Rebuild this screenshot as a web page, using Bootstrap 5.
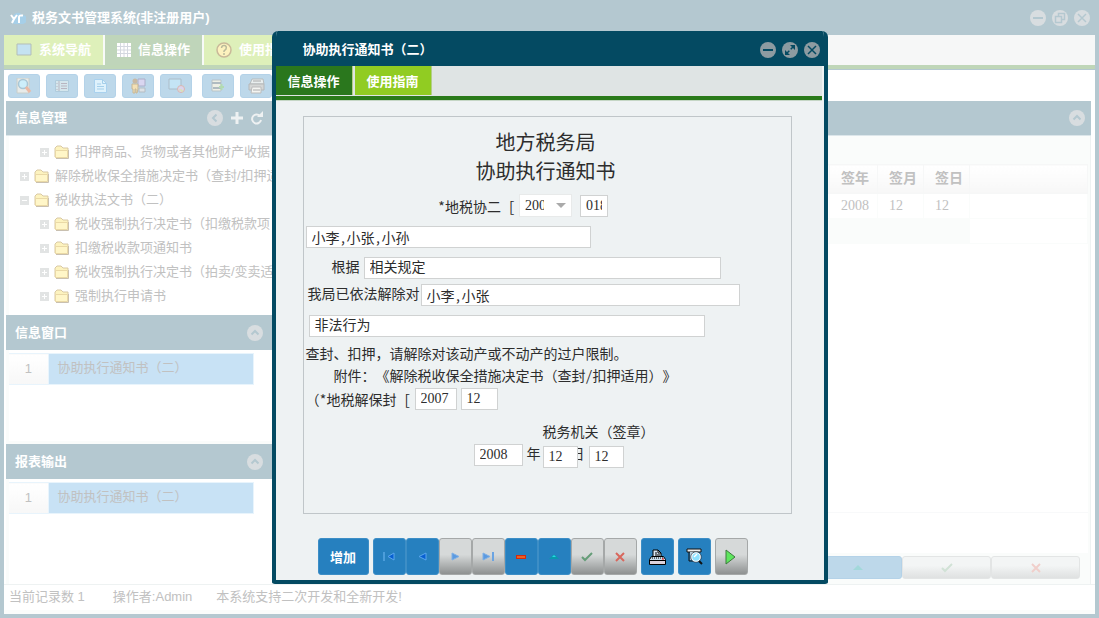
<!DOCTYPE html>
<html lang="zh-CN">
<head>
<meta charset="utf-8">
<meta name="viewport" content="width=device-width, initial-scale=1">
<title>税务文书管理系统</title>
<link rel="stylesheet" href="https://cdn.jsdelivr.net/npm/bootstrap@5.3.0/dist/css/bootstrap.min.css">
<style>
:root{--frame:#b4c8d0;--deep:#044a62;--pane:#fafcfb;--faint:#c1c1c1;--ink:#2d2d2d;}
body{font:13px/20px "Liberation Sans","Noto Sans CJK SC",sans-serif;color:var(--faint);background:var(--frame);text-spacing-trim:space-all}
svg{display:block;flex:none}
button{border:0;padding:0;background:none;color:inherit;font:inherit}
.app{min-height:100vh;border:solid var(--frame);border-width:0 4px 4px;overflow:hidden}
.titlebar{height:35px;background:var(--frame);color:#fff;font-weight:700;padding:0 5px 0 6px;gap:6px}
.apptabs{background:#f6f7f7;border-bottom:4px solid #bfd6b8;height:34px;color:#fff;font-weight:700;margin-bottom:1px}
.apptabs button{height:30px;background:#def0ba;border-right:2px solid #f8faf8;padding:0 12px;gap:7px;font-weight:700}
.apptabs .on{background:#bfd5ba}
.work{background:#fff;padding:0 4px 0 2px}
.tools{height:31px;padding-left:2px;gap:6px}
.tool{width:32px;height:24px;border-radius:3px;background:#bdd8ea;border:1px solid #b4d2e8}
.side{width:271px}
.phead{height:35px;background:var(--frame);color:#fff;font-weight:700;padding:0 6px 0 9px}
.phead.strip{border-bottom:1px solid #dce6ea}
.tree{list-style:none;margin:0;padding:4px 0 7px 11px;border-left:3px solid var(--pane)}
.tree li{height:24px;gap:5px;white-space:nowrap;overflow:hidden}
.tree .sub{padding-left:20px}
.rows{border-left:3px solid var(--pane);padding-top:3px}
.rows.mid{height:94px;border-bottom:3px solid var(--pane)}
.rows table{width:245px}
.rows th{width:39px;height:31px;text-align:center;font-weight:400;border:1px solid #e8f4fc;border-left:0;background:linear-gradient(#fff,#f7f7f7)}
.rows td{background:#c8e2f5;border:1px solid #e8f4fc;padding:0 0 3px 9px}
.grid-area{background:var(--pane);border-right:1px solid #eef2f2;padding:28px 2px 0 0}
.records{width:100%;table-layout:fixed;font-family:"Liberation Serif","Noto Sans CJK SC",serif;font-size:14px}
.records th{height:29px;background:linear-gradient(#fff,#f7f7f7);border:1px solid #f6f7f7;padding-left:11px;color:var(--faint)}
.records td{height:25px;background:#fff;border:1px solid var(--pane);padding-left:11px}
.records tr:last-child .cell{background:var(--pane)}
.c-y{width:48px}.c-m{width:46px}.c-end{width:118px}
.wash{height:23px;width:89px;border:1px solid #e3e5e5;border-radius:3px;background:linear-gradient(#f3f5f5 40%,#dfe1e1)}
.wash.blue{background:#bdd8ea;border-color:#b4d2e8}
.status{background:#fff;border-top:1px solid #eef2f2;border-bottom:4px solid var(--pane);height:30px;padding:0 0 2px 5px}
.dialog-box{position:absolute;left:0;right:0;top:31px;margin:0 auto;width:556px;background:#eef2f3;border:solid var(--deep);border-width:0 4px 4px;border-radius:6px 6px 3px 3px;overflow:hidden;color:var(--ink)}
.dhead{height:35px;background:var(--deep);color:#fff;font-weight:700;padding:2px 4px 0 27px}
.dtabs{height:34px;background:#dfe4e4;border-bottom:4px solid #2a7a1a;gap:2px;margin-right:2px;box-shadow:0 1px #c5d6c5}
.dtabs button{height:29px;width:77px;background:#91cc22;color:#fff;font-weight:700;border-right:1px solid #b3ce88;padding-top:3px}
.dtabs .on{background:#2a771d}
.paper{margin:16px 32px 0 27px;border:1px solid #c0c6c9;padding:10px 0 45px 2px;font-family:"Liberation Serif","Noto Sans CJK SC",serif;font-size:14px;line-height:22px}
.paper h1{font:400 20px/29px "Noto Sans CJK SC",sans-serif;margin:0;padding-right:5px}
.paper .half{font-family:"Noto Sans Mono CJK SC","Liberation Serif","Noto Sans CJK SC",monospace}
.paper label{white-space:nowrap}
.fld{height:22px;border:1px solid #d0d2d2;background:#fff;padding:0 5px;color:var(--ink);border-radius:0;outline:0;font:inherit;display:block}
.yearpick{position:relative;width:53px}
.yearpick select{display:block;appearance:none;width:100%;height:23px;border:1px solid #e8eaea;background:#fff;padding:0 27px 0 5px;font:inherit;color:var(--ink)}
.yearpick svg{position:absolute;right:6px;top:9px;pointer-events:none}
.numrow{padding-right:50px}
.w-s{width:28px}.w-m{width:35px}.w-l{width:42px}
.gap-a{margin-top:9px}.gap-b{margin-top:5px}.gap-c{margin-top:12px}.gap-d{margin-top:2px}
.in-a{padding-left:26px}.in-b{padding-left:28px}
.dfoot{padding:24px 0 5px 42px}
.act{width:33px;height:37px;border-radius:3px;background:#2680bf;border:1px solid #3d8ec6;color:#fff}
.act.off{background:linear-gradient(#d6d9d9 45%,#8e9191);border-color:#a5a8a8}
.act.wide{width:51px;font-weight:700;padding-top:2px}
</style>
</head>
<body>
<svg width="0" height="0" class="position-absolute" aria-hidden="true"><defs>
<symbol id="folder" viewBox="0 0 16 14"><path d="M1 12V3l2-2h4l2 2h5v9z" fill="#fdf3bf" stroke="#d9c9a4"/><path d="M1.500 12.500V5.500h12v7z" fill="#fff6c8" stroke="#ead9a6"/><path d="M2 13.500h12.500V5" fill="none" stroke="#c9c0b0"/></symbol>
<symbol id="plus" viewBox="0 0 9 9"><path d="M0 0h9v9H0z" fill="#e2e4e4"/><path d="M4.500 2v5M2 4.500h5" stroke="#fff"/></symbol>
<symbol id="minus" viewBox="0 0 9 9"><path d="M0 0h9v9H0z" fill="#e2e4e4"/><path d="M2 4.500h5" stroke="#fff"/></symbol>
<symbol id="up" viewBox="0 0 16 16"><circle cx="8" cy="8" r="8" fill="#d8dde0"/><path d="M4.500 9.500L8 6l3.500 3.500" fill="none" stroke="#b4c8d0" stroke-width="2"/></symbol>
</defs></svg>

<div class="app d-flex flex-column">
 <header class="titlebar d-flex align-items-center">
  <svg width="16" height="14" viewBox="0 0 16 14"><path d="M4 13a4 4 0 0 1-1-7 5 5 0 0 1 9-2 4.500 4.500 0 0 1 1 9z" fill="#a6cfe8"/><path d="M1 4l3 4 3-4M4 8l-2 4M9 12V6q0-2 4-1.500" fill="none" stroke="#fff" stroke-width="2"/></svg>
  <span class="me-auto">税务文书管理系统(非注册用户)</span>
  <button aria-label="最小化"><svg width="16" height="16"><circle cx="8" cy="8" r="8" fill="#d8dde0"/><path d="M3 8h10" stroke="#b4c8d0" stroke-width="2"/></svg></button>
  <button aria-label="还原"><svg width="16" height="16"><circle cx="8" cy="8" r="8" fill="#d8dde0"/><path d="M6.500 6V3.500h6v6H10M3.500 6.500h6v6h-6z" fill="none" stroke="#b4c8d0" stroke-width="1.500"/></svg></button>
  <button aria-label="关闭"><svg width="16" height="16"><circle cx="8" cy="8" r="8" fill="#d8dde0"/><path d="M4 4l8 8m0-8l-8 8" stroke="#b4c8d0" stroke-width="1.500"/></svg></button>
 </header>
 <nav class="apptabs d-flex">
  <button class="d-flex align-items-center"><svg width="16" height="14"><path d="M1 1h14v11H1z" fill="#c4e2f2" stroke="#b3bdb8"/></svg>系统导航</button>
  <button class="on d-flex align-items-center"><svg width="14" height="14"><path d="M0 0h14v14H0z" fill="#fff"/><path d="M0 3.500h14M0 7h14M0 10.500h14M3.500 0v14M7 0v14M10.500 0v14" stroke="#d4d8e0"/></svg>信息操作</button>
  <button class="d-flex align-items-center"><svg width="16" height="16"><circle cx="8" cy="8" r="7" fill="#fdf2be" stroke="#c9b999" stroke-width="1.500"/><path d="M5.500 6q.5-3 3-2.500T10 7L8 9v1M8 11v2" fill="none" stroke="#b9ba9a" stroke-width="1.500"/></svg>使用指南</button>
 </nav>
 <main class="work flex-grow-1 d-flex flex-column">
  <div class="tools d-flex align-items-center">
   <button class="tool d-flex align-items-center justify-content-center" aria-label="查询"><svg width="16" height="16"><path d="M1 0h12v15H1z" fill="#e8ebe9" stroke="#c8ceca"/><circle cx="7" cy="6" r="4.500" fill="#cdeefa" stroke="#a9c6d5" stroke-width="1.500"/><path d="M10 9l4 5" stroke="#eab9a5" stroke-width="3"/></svg></button>
   <button class="tool d-flex align-items-center justify-content-center" aria-label="列表"><svg width="14" height="12"><path d="M.5.500h13v11H.5z" fill="#d4e6ed" stroke="#afcbdc"/><path d="M4 1v10M6 3.500h6M6 6h6M6 8.500h6M2 3v1M2 6v1M2 9v1" stroke="#b8b5c0"/></svg></button>
   <button class="tool d-flex align-items-center justify-content-center" aria-label="文档"><svg width="13" height="14"><path d="M.5.500h8l4 4v9H.5z" fill="#dff2fc" stroke="#a9d1ee"/><path d="M8.500.500v4h4M3 5h4M3 7.500h7M3 10h7" fill="none" stroke="#a4cfea"/></svg></button>
   <button class="tool d-flex align-items-center justify-content-center" aria-label="用户"><svg width="15" height="16"><path d="M7 1h7v7H7z" fill="#d9d6f0" stroke="#acaec8"/><path d="M8 10h6v4H8z" fill="#dde2e6" stroke="#b4bdc4"/><circle cx="4" cy="3" r="2.500" fill="#c9b9a3"/><path d="M1 6h6v5l-1 4H5v-4H4v4H2v-4H1z" fill="#f3e0b5" stroke="#c7b796"/></svg></button>
   <button class="tool d-flex align-items-center justify-content-center" aria-label="窗口"><svg width="17" height="15"><path d="M1 1h12v10H1z" fill="#c4e4f5" stroke="#acbdc9"/><circle cx="13" cy="11" r="3.500" fill="#dcd4ec" stroke="#d8b8b0"/><path d="M11 12h3v2" stroke="#d6e8a0" fill="none"/></svg></button>
   <button class="tool ms-1 d-flex align-items-center justify-content-center" aria-label="新增"><svg width="14" height="13"><path d="M1 1h9v11H1z" fill="#eeefe5" stroke="#b8c3c8"/><path d="M1 4h9M2 9h8" stroke="#b0bbc1" stroke-width="2"/><path d="M10.500 5v6M8 8h5" stroke="#b2dbb2" stroke-width="2"/></svg></button>
   <button class="tool d-flex align-items-center justify-content-center" aria-label="打印"><svg width="17" height="16"><path d="M4 1h11l1 5H2z" fill="#e9eeee" stroke="#b7bcbd"/><path d="M1 6h15v6H1z" fill="#d4d6d5" stroke="#b5b7b8"/><path d="M4 9h9v6H3z" fill="#f4f5f2" stroke="#bbb"/><path d="M5 3h8M5 12h7" stroke="#aaa"/></svg></button>
  </div>
  <div class="d-flex flex-grow-1">
   <aside class="side d-flex flex-column flex-shrink-0">
    <div class="phead strip d-flex align-items-center"><span class="me-auto">信息管理</span>
     <div class="d-flex align-items-center gap-2 me-2">
     <svg width="16" height="16"><circle cx="8" cy="8" r="8" fill="#d8dde0"/><path d="M9.500 4.500L6 8l3.500 3.500" fill="none" stroke="#b4c8d0" stroke-width="2"/></svg>
     <svg width="12" height="12"><path d="M6 0v12M0 6h12" stroke="#eef1f2" stroke-width="3"/></svg>
     <svg width="12" height="14"><path d="M9 5A4.500 4.500 0 1 0 10 9" fill="none" stroke="#eef1f2" stroke-width="2"/><path d="M6 6h6V0z" fill="#eef1f2"/></svg></div>
    </div>
    <ul class="tree">
     <li class="sub d-flex align-items-center"><svg width="9" height="9"><use href="#plus"/></svg><svg width="16" height="14"><use href="#folder"/></svg>扣押商品、货物或者其他财产收据</li>
     <li class="d-flex align-items-center"><svg width="9" height="9"><use href="#plus"/></svg><svg width="16" height="14"><use href="#folder"/></svg>解除税收保全措施决定书（查封/扣押适</li>
     <li class="d-flex align-items-center"><svg width="9" height="9"><use href="#minus"/></svg><svg width="16" height="14"><use href="#folder"/></svg>税收执法文书（二）</li>
     <li class="sub d-flex align-items-center"><svg width="9" height="9"><use href="#plus"/></svg><svg width="16" height="14"><use href="#folder"/></svg>税收强制执行决定书（扣缴税款项</li>
     <li class="sub d-flex align-items-center"><svg width="9" height="9"><use href="#plus"/></svg><svg width="16" height="14"><use href="#folder"/></svg>扣缴税收款项通知书</li>
     <li class="sub d-flex align-items-center"><svg width="9" height="9"><use href="#plus"/></svg><svg width="16" height="14"><use href="#folder"/></svg>税收强制执行决定书（拍卖/变卖适</li>
     <li class="sub d-flex align-items-center"><svg width="9" height="9"><use href="#plus"/></svg><svg width="16" height="14"><use href="#folder"/></svg>强制执行申请书</li>
    </ul>
    <div class="phead d-flex align-items-center"><span class="me-auto">信息窗口</span><svg class="me-2" width="16" height="16"><use href="#up"/></svg></div>
    <div class="rows mid"><table><tr><th>1</th><td>协助执行通知书（二）</td></tr></table></div>
    <div class="phead d-flex align-items-center"><span class="me-auto">报表输出</span><svg class="me-2" width="16" height="16"><use href="#up"/></svg></div>
    <div class="rows flex-grow-1"><table><tr><th>1</th><td>协助执行通知书（二）</td></tr></table></div>
   </aside>
   <section class="flex-grow-1 d-flex flex-column ms-1">
    <div class="phead strip d-flex align-items-center justify-content-end"><svg width="16" height="16"><use href="#up"/></svg></div>
    <div class="grid-area flex-grow-1 d-flex flex-column">
     <div class="bg-white flex-grow-1"><table class="records">
      <colgroup><col><col class="c-y"><col class="c-m"><col class="c-m"><col class="c-end"></colgroup>
      <tr><th></th><th>签年</th><th>签月</th><th>签日</th><th></th></tr>
      <tr><td></td><td>2008</td><td>12</td><td>12</td><td></td></tr>
      <tr><td></td><td class="cell"></td><td class="cell"></td><td class="cell"></td><td></td></tr>
     </table></div>
     <div class="bg-white border-top border-light pt-4"><div class="pt-3"></div></div>
     <div class="d-flex justify-content-end pe-2" style="padding:3px 0 5px">
      <button class="wash blue d-flex align-items-center justify-content-center" aria-label="编辑"><svg width="10" height="6"><path d="M0 5l5-5 5 5z" fill="#a2d8da"/></svg></button>
      <button class="wash d-flex align-items-center justify-content-center" aria-label="确定"><svg width="12" height="10"><path d="M1 5l3 3 7-7" fill="none" stroke="#d1e2d6" stroke-width="2"/></svg></button>
      <button class="wash d-flex align-items-center justify-content-center" aria-label="取消"><svg width="10" height="10"><path d="M1 1l8 8m0-8l-8 8" stroke="#f0cfcb" stroke-width="2"/></svg></button>
     </div>
    </div>
   </section>
  </div>
 </main>
 <footer class="status d-flex align-items-center"><span>当前记录数 1</span><span class="ms-4 ps-1">操作者:Admin</span><span class="ms-4">本系统支持二次开发和全新开发!</span></footer>
</div>

<div class="dialog-box" role="dialog" aria-label="协助执行通知书（二）">
 <div class="dhead d-flex align-items-center"><span class="me-auto">协助执行通知书（二）</span>
  <div class="d-flex" style="gap:6px">
   <button aria-label="最小化"><svg width="16" height="16"><circle cx="8" cy="8" r="8" fill="#8d9ba1"/><path d="M3 8h10" stroke="#044a62" stroke-width="2"/></svg></button>
   <button aria-label="最大化"><svg width="16" height="16"><circle cx="8" cy="8" r="8" fill="#8d9ba1"/><path d="M4.500 11.500l7-7" stroke="#044a62" stroke-width="1.500" stroke-dasharray="4 2"/><path d="M8 3h5v5zM3 8v5h5z" fill="#044a62"/></svg></button>
   <button aria-label="关闭"><svg width="16" height="16"><circle cx="8" cy="8" r="8" fill="#8d9ba1"/><path d="M4 4l8 8m0-8l-8 8" stroke="#044a62" stroke-width="1.500"/></svg></button>
  </div>
 </div>
 <div class="dtabs d-flex"><button class="on">信息操作</button><button>使用指南</button></div>
 <form class="paper">
  <h1 class="text-center">地方税务局</h1>
  <h1 class="text-center">协助执行通知书</h1>
  <div class="gap-a d-flex justify-content-center align-items-center numrow">
   <label class="half me-1" for="yr">*地税协二 [</label>
   <div class="yearpick me-2"><select id="yr"><option>2007</option></select><svg width="10" height="5"><path d="M0 0h10L5 5z" fill="#aaa"/></svg></div>
   <input class="fld w-s" value="018" aria-label="文号">
  </div>
  <input class="fld half gap-a" style="width:285px" value="小李,小张,小孙" aria-label="受文人">
  <div class="gap-a d-flex in-a"><label for="law" class="me-1">根据</label><input id="law" class="fld" style="width:357px" value="相关规定"></div>
  <div class="gap-b d-flex"><label for="who" style="width:115px;padding-left:2px">我局已依法解除对</label><input id="who" class="fld half" style="width:319px" value="小李,小张"></div>
  <div class="gap-a d-flex" style="padding-left:3px"><input class="fld" style="width:396px" value="非法行为" aria-label="事由"></div>
  <div class="gap-b half">查封、扣押，请解除对该动产或不动产的过户限制。</div>
  <div class="in-b half">附件：《解除税收保全措施决定书（查封/扣押适用）》</div>
  <div class="gap-d d-flex"><label for="ref" class="half me-1">（*地税解保封 [</label><input id="ref" class="fld w-l me-1" value="2007"><input class="fld" style="width:37px" value="12" aria-label="号"></div>
  <div class="gap-c" style="padding-left:237px">税务机关（签章）</div>
  <div class="d-flex" style="padding-left:168px">
   <input id="sy" class="fld" style="width:49px" value="2008"><label for="sy" class="ms-1" style="width:16px">年</label>
   <input id="sm" class="fld w-m position-relative z-1 gap-d" value="12" aria-label="月"><label for="sd" style="margin-left:-7px">日</label>
   <input id="sd" class="fld w-m ms-1 gap-d" value="12">
  </div>
 </form>
 <div class="dfoot d-flex gap-1">
  <button class="act wide">增加</button>
  <div class="d-flex">
   <button class="act d-flex align-items-center justify-content-center" aria-label="首条"><svg width="12" height="9"><path d="M1 0v9" stroke="#72baf5" stroke-width="1"/><path d="M11 1v7L5 4.500z" fill="#0860d2" stroke="#5aa7ee"/></svg></button>
   <button class="act d-flex align-items-center justify-content-center" aria-label="上一条"><svg width="9" height="9"><path d="M8 1v7L1 4.500z" fill="#0860d2" stroke="#5aa7ee"/></svg></button>
   <button class="act off d-flex align-items-center justify-content-center" aria-label="下一条"><svg width="9" height="9"><path d="M1 1v7l7-3.500z" fill="#5c9ae0" stroke="#7fb0e6"/></svg></button>
   <button class="act off d-flex align-items-center justify-content-center" aria-label="末条"><svg width="12" height="9"><path d="M11 0v9" stroke="#6ba4e2" stroke-width="2"/><path d="M1 1v7l7-3.500z" fill="#5c9ae0" stroke="#7fb0e6"/></svg></button>
   <button class="act d-flex align-items-center justify-content-center" aria-label="删除"><svg width="10" height="4"><path d="M0 0h10v4H0z" fill="#d32a10"/><path d="M1 2h8" stroke="#ff9a30"/></svg></button>
   <button class="act d-flex align-items-center justify-content-center" aria-label="编辑"><svg width="10" height="5"><path d="M0 5l4-4h2l4 4z" fill="#0898ac"/><path d="M3 3l2-2 2 2z" fill="#25d7e2"/></svg></button>
   <button class="act off d-flex align-items-center justify-content-center" aria-label="确定"><svg width="12" height="10"><path d="M1 5l3 3 7-7" fill="none" stroke="#659d78" stroke-width="2"/></svg></button>
   <button class="act off d-flex align-items-center justify-content-center" aria-label="取消"><svg width="10" height="10"><path d="M1 1l8 8m0-8l-8 8" stroke="#d8675d" stroke-width="2"/></svg></button>
  </div>
  <button class="act d-flex align-items-center justify-content-center" aria-label="打印"><svg width="17" height="16"><path d="M4 8V1h5l3 3v4" fill="#dbe9f5" stroke="#000"/><path d="M9 1v3h3M6 4h2M6 6h5" fill="none" stroke="#000"/><path d="M2.500 7.500h12l2 3v5H.5v-5z" fill="#c8dcea" stroke="#000"/><path d="M3 9h11" stroke="#000" stroke-dasharray="1 1"/><path d="M1 11.500h15" stroke="#000"/><path d="M1 12h15v3H1z" fill="#ddd2dc"/><path d="M13 10h2" stroke="#f00"/></svg></button>
  <button class="act d-flex align-items-center justify-content-center" aria-label="预览"><svg width="17" height="17"><path d="M1 1h14v3H1z" fill="#eee" stroke="#111"/><path d="M3 4v9h5" fill="none" stroke="#111"/><path d="M4 4h3v8H4z" fill="#b9cbd8"/><circle cx="10" cy="9" r="4.500" fill="#8ee1ff" stroke="#f5fbff" stroke-width="1.500"/><circle cx="10" cy="9" r="5.300" fill="none" stroke="#123" stroke-width=".6"/><path d="M8 9l3-3" stroke="#fff" stroke-width="1.500"/><path d="M13 13l3 3" stroke="#111" stroke-width="2"/></svg></button>
  <button class="act off d-flex align-items-center justify-content-center" aria-label="运行"><svg width="12" height="16"><path d="M1 1v14l9-7z" fill="#5ee65e" stroke="#3c7a3c"/></svg></button>
 </div>
</div>
<script src="https://cdn.jsdelivr.net/npm/bootstrap@5.3.0/dist/js/bootstrap.bundle.min.js"></script>
</body>
</html>
